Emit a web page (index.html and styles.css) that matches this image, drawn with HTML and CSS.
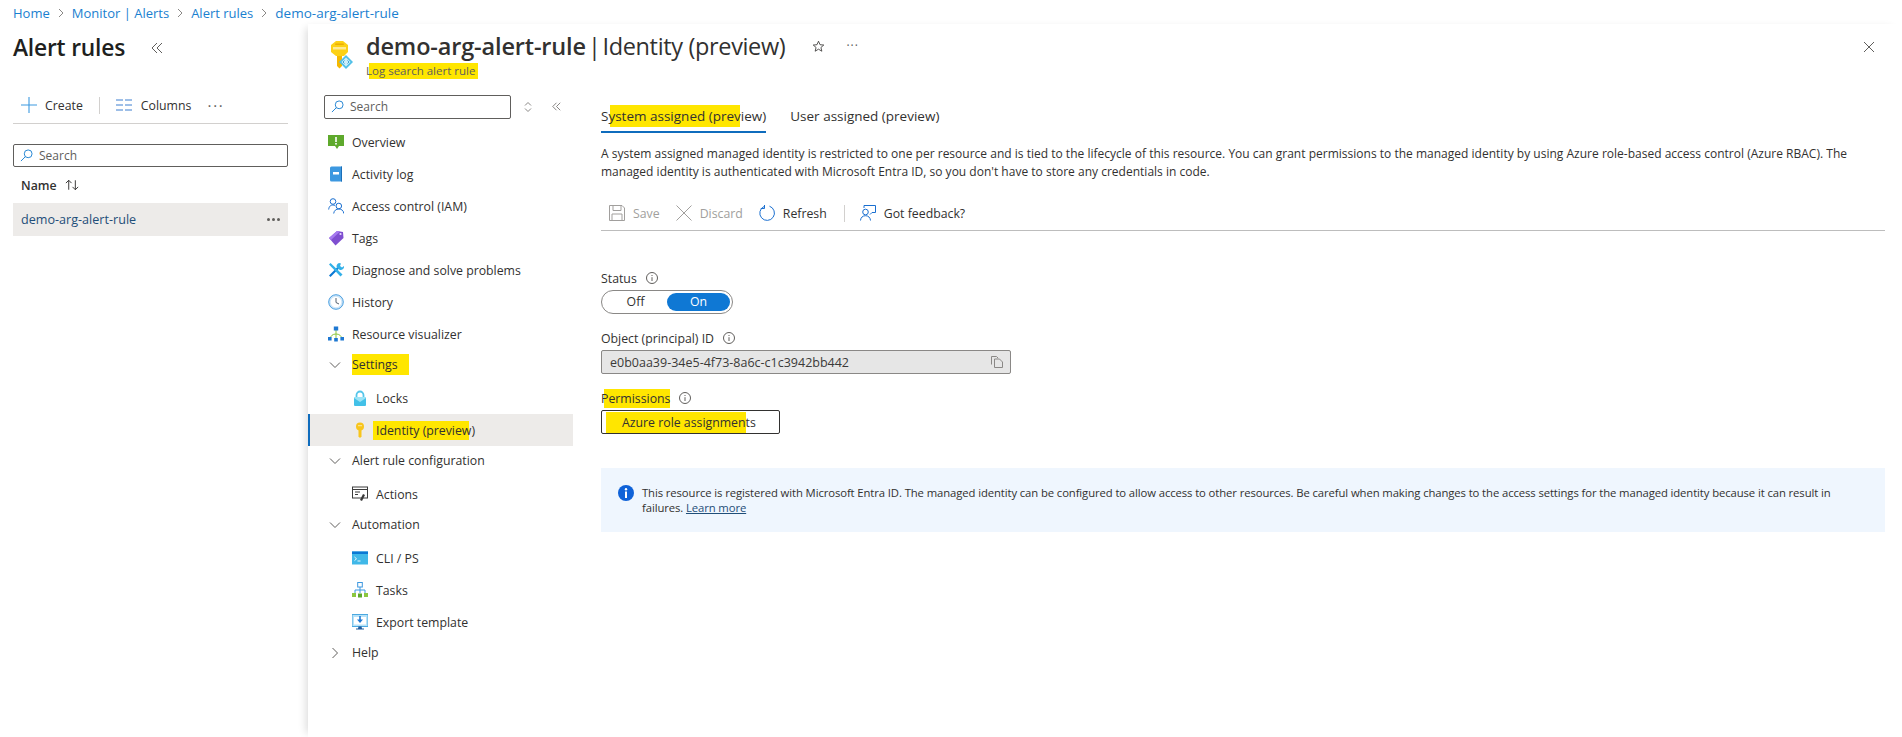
FILE: index.html
```html
<!DOCTYPE html>
<html lang="en">
<head>
<meta charset="utf-8">
<title>Identity (preview)</title>
<link rel="stylesheet" href="styles.css">
</head>
<body>
<nav class="crumbs">
  <a>Home</a><svg class="sep" viewBox="0 0 8 10"><path d="M2 1l4 4-4 4"/></svg>
  <a>Monitor | Alerts</a><svg class="sep" viewBox="0 0 8 10"><path d="M2 1l4 4-4 4"/></svg>
  <a>Alert rules</a><svg class="sep" viewBox="0 0 8 10"><path d="M2 1l4 4-4 4"/></svg>
  <a class="last">demo-arg-alert-rule</a>
</nav>
<div class="shell">
  <aside class="list">
    <div class="list-head">
      <h2>Alert rules</h2>
      <svg class="dbl" viewBox="0 0 12 12"><path d="M6 1L1 6l5 5M11 1L6 6l5 5"/></svg>
    </div>
    <div class="list-bar">
      <svg class="ic-plus" viewBox="0 0 16 16"><path d="M8 0v16M0 8h16"/></svg>
      <span>Create</span>
      <i class="vr"></i>
      <svg class="ic-cols" viewBox="0 0 16 12"><path d="M0 1h7M9 1h7M0 6h7M9 6h7M0 11h7M9 11h7"/></svg>
      <span>Columns</span>
      <span class="dots">···</span>
    </div>
    <label class="search wide">
      <svg viewBox="0 0 14 14"><circle cx="8.8" cy="5.2" r="4.2"/><path d="M5.8 8.2L1 13"/></svg>
      <span>Search</span>
    </label>
    <div class="col-head"><b>Name</b><svg viewBox="0 0 18 12"><path d="M5 11V1M2 4l3-3 3 3M12 1v10M9 8l3 3 3-3"/></svg></div>
    <div class="list-row"><span>demo-arg-alert-rule</span><span class="row-dots"><i></i><i></i><i></i></span></div>
  </aside>

  <main class="blade">
    <header class="blade-head">
      <svg class="res-icon" viewBox="0 0 22 28">
        <path d="M5 0h7l5 4v7l-4 4H5L0 11V4z" fill="#fcd116"/>
        <rect x="2" y="6" width="13" height="2.500" fill="#fff" opacity=".55"/>
        <rect x="4" y="2.500" width="9" height="1.500" rx=".7" fill="#e8a200" opacity=".75"/>
        <path d="M6 15h5v10l-2.500 2.500L6 25z" fill="#f5b800"/>
        <path d="M11 18h2v2h-2zM11 22h1v2h-1z" fill="#f5b800"/>
        <path d="M15 14l7 7-7 7-7-7z" fill="#50c0e8"/>
        <path d="M15 16.500l4.500 4.500-4.500 4.500-4.500-4.500z" fill="#cdeefa"/>
        <path d="M13.500 19.500L12 21l1.500 1.500M16.500 19.500L18 21l-1.500 1.500" fill="none" stroke="#1a8fc8" stroke-width=".8"/>
      </svg>
      <div class="head-text">
        <div class="title-line">
          <h1><b>demo-arg-alert-rule</b><span class="bar">|</span>Identity (preview)</h1>
          <svg class="star" viewBox="0 0 16 16"><path d="M8 1.500l1.900 4.300 4.600.4-3.500 3 1.100 4.600L8 11.300l-4.100 2.500L5 9.200l-3.500-3 4.600-.4z"/></svg>
          <span class="dots small">···</span>
        </div>
        <div class="sub"><mark class="m-sub">Log search alert rule</mark></div>
      </div>
      <svg class="close" viewBox="0 0 12 12"><path d="M1 1l10 10M11 1L1 11"/></svg>
    </header>

    <div class="blade-body">
      <nav class="menu">
        <div class="menu-top">
          <label class="search side">
            <svg viewBox="0 0 14 14"><circle cx="8.8" cy="5.2" r="4.2"/><path d="M5.8 8.2L1 13"/></svg>
            <span>Search</span>
          </label>
          <svg class="updown" viewBox="0 0 8 12"><path d="M1 4.500L4 1.500l3 3M1 7.500l3 3 3-3"/></svg>
          <svg class="dbl small" viewBox="0 0 12 12"><path d="M6 1L1 6l5 5M11 1L6 6l5 5"/></svg>
        </div>
        <a class="item">
          <svg viewBox="0 0 16 16"><rect y="1" width="16" height="11" fill="#5ea92c"/><path d="M7 12h4l-2 3z" fill="#5ea92c"/><rect x="7.200" y="3" width="1.600" height="5" fill="#fff"/><rect x="7.200" y="9" width="1.600" height="1.600" fill="#fff"/></svg>
          <span>Overview</span></a>
        <a class="item">
          <svg viewBox="0 0 16 16"><path d="M2 2q0-1.500 1.500-1.500H14V15.500H3.500Q2 15.500 2 14z" fill="#3c98e0"/><path d="M13 .5h1v15h-1z" fill="#1b6fb8"/><rect x="5" y="6" width="6" height="2.500" fill="#fff"/></svg>
          <span>Activity log</span></a>
        <a class="item">
          <svg class="line-blue" viewBox="0 0 16 16"><circle cx="5" cy="3.500" r="2.800"/><path d="M.7 11.500C1 8 3 7 5 7c.8 0 1.500.2 2 .5"/><circle cx="10.800" cy="8" r="2.800"/><path d="M5.700 15.500c.3-3 2.500-4.500 5.100-4.500s4.800 1.500 5 4.500"/></svg>
          <span>Access control (IAM)</span></a>
        <a class="item">
          <svg viewBox="0 0 16 16"><path d="M1 8L9 1l6 1 .5 6-8 7.500z" fill="#7f4fd0"/><path d="M1 8L9 1l3 .5L3 10z" fill="#a67af0"/><circle cx="12.500" cy="4" r="1.100" fill="#e8dcff"/></svg>
          <span>Tags</span></a>
        <a class="item">
          <svg viewBox="0 0 16 16"><path d="M1 13.500L10 4.500l1.500 1.500L2.500 15z" fill="#0a78d4"/><path d="M11 1a3.500 3.500 0 0 0-2 5l3 2a3.500 3.500 0 0 0 4-4l-2 1.500-2-1.500L13 1.500z" fill="#32b0e8"/><path d="M1 2.500L2.500 1l12 11.500-2 2z" fill="#32b0e8"/></svg>
          <span>Diagnose and solve problems</span></a>
        <a class="item">
          <svg viewBox="0 0 16 16"><circle cx="8" cy="8" r="7.300" fill="#cfe6f8" stroke="#4a9fe0"/><circle cx="8" cy="8" r="5.300" fill="#fff"/><path d="M8 4v4.500l3 1.500" fill="none" stroke="#54606e" stroke-width="1"/></svg>
          <span>History</span></a>
        <a class="item">
          <svg viewBox="0 0 16 16"><path d="M8 4v8M2 13q1-5 6-5t6 5" fill="none" stroke="#8cc63f"/><rect x="5.800" y=".5" width="4.400" height="4" fill="#1e78d2"/><rect x="0" y="11" width="3.600" height="3.500" fill="#1e78d2"/><rect x="6.200" y="12" width="3.600" height="3.500" fill="#1e78d2"/><rect x="12.400" y="11" width="3.600" height="3.500" fill="#1e78d2"/></svg>
          <span>Resource visualizer</span></a>

        <div class="group"><svg class="chev" viewBox="0 0 12 8"><path d="M1 1.500l5 5 5-5"/></svg><mark class="m-set">Settings</mark></div>
        <a class="item sub-item">
          <svg viewBox="0 0 16 16"><path d="M4.500 8V5a3.500 3.500 0 0 1 7 0v3" fill="none" stroke="#54c5ea" stroke-width="1.800"/><rect x="2" y="7" width="12" height="9" rx="1" fill="#42c1e8"/><path d="M2 8l6 4 6-4v-1H2z" fill="#9be3f6"/></svg>
          <span>Locks</span></a>
        <a class="item sub-item current">
          <svg viewBox="0 0 16 16"><circle cx="8" cy="4.500" r="4" fill="#f8c51c"/><path d="M6.500 8h3v6.500L8 16l-1.500-1.500z" fill="#f8c51c"/><rect x="6" y="3.200" width="4" height="1" fill="#fff" opacity=".6"/></svg>
          <mark class="m-id">Identity (preview)</mark></a>

        <div class="group"><svg class="chev" viewBox="0 0 12 8"><path d="M1 1.500l5 5 5-5"/></svg><span>Alert rule configuration</span></div>
        <a class="item sub-item">
          <svg viewBox="0 0 16 16"><rect x=".5" y="1" width="15" height="11" fill="#fff" stroke="#3a3a3a"/><path d="M.5 3.500h15M3 6h5M3 8.500h3" fill="none" stroke="#3a3a3a"/><path d="M8 14l3-6 2 1-3 6z" fill="#3a3a3a"/></svg>
          <span>Actions</span></a>

        <div class="group"><svg class="chev" viewBox="0 0 12 8"><path d="M1 1.500l5 5 5-5"/></svg><span>Automation</span></div>
        <a class="item sub-item">
          <svg viewBox="0 0 16 16"><rect y="1.500" width="16" height="13" fill="#40b8e8"/><rect y="1.500" width="16" height="2.500" fill="#0a78d4"/><path d="M2.500 7l2 1.800-2 1.800M5.500 11h3" fill="none" stroke="#fff" stroke-width=".9"/></svg>
          <span>CLI / PS</span></a>
        <a class="item sub-item">
          <svg viewBox="0 0 16 16"><path d="M8 5v6M3 11V8h10v3" fill="none" stroke="#3c98e0"/><rect x="5.700" y=".5" width="4.600" height="4.500" fill="#fff" stroke="#3c98e0"/><rect x="0" y="11" width="4" height="4" fill="#8cc63f"/><rect x="6" y="11.500" width="4" height="4" fill="#5ea92c"/><rect x="12" y="11" width="4" height="4" fill="#8cc63f"/></svg>
          <span>Tasks</span></a>
        <a class="item sub-item">
          <svg viewBox="0 0 16 16"><rect y=".5" width="16" height="12" fill="#b6e2f8" stroke="#4aa8e0"/><rect x="2" y="3" width="12" height="7.500" fill="#fff"/><path d="M8 2v5" stroke="#1e78d2" stroke-width="1.600"/><path d="M5 5.500h6L8 9z" fill="#1e78d2"/><path d="M6.500 12.500h3l.5 2h2v1H4v-1h2z" fill="#1e5a9c"/></svg>
          <span>Export template</span></a>

        <div class="group"><svg class="chev closed" viewBox="0 0 8 12"><path d="M1.500 1l5 5-5 5"/></svg><span>Help</span></div>
      </nav>

      <section class="content">
        <div class="tabs">
          <span class="tab on"><mark class="m-tab">System assigned (preview)</mark></span>
          <span class="tab">User assigned (preview)</span>
        </div>
        <p class="desc">A system assigned managed identity is restricted to one per resource and is tied to the lifecycle of this resource. You can grant permissions to the managed identity by using Azure role-based access control (Azure RBAC). The managed identity is authenticated with Microsoft Entra ID, so you don't have to store any credentials in code.</p>
        <div class="cmd">
          <span class="cmd-btn off">
            <svg viewBox="0 0 16 16"><path d="M.5.500h12.500l2.500 2.500v12.500H.5zM4 .5v5h8v-5M3 15.500V9h10v6.500"/></svg>Save</span>
          <span class="cmd-btn off">
            <svg viewBox="0 0 16 16"><path d="M.5.500l15 15M15.500.500l-15 15"/></svg>Discard</span>
          <span class="cmd-btn">
            <svg class="blue" viewBox="0 0 16 16"><path d="M10.500 1.200A7.300 7.300 0 1 1 5 1.500M5.500 0v3.500H1.800"/></svg>Refresh</span>
          <i class="vr"></i>
          <span class="cmd-btn">
            <svg class="blue" viewBox="0 0 16 16"><circle cx="5.500" cy="7" r="2.800"/><path d="M.5 15.500c.2-3 2.200-4.800 5-4.800s4.800 1.800 5 4.800M4 3V.5h11.500v7H12l-2 2"/></svg>Got feedback?</span>
        </div>

        <div class="field first">
          <div class="f-label">Status<svg class="info" viewBox="0 0 12 12"><circle cx="6" cy="6" r="5.500"/><path d="M6 5.200V9M6 3v1"/></svg></div>
          <div class="toggle"><span>Off</span><span class="sel">On</span></div>
        </div>
        <div class="field">
          <div class="f-label">Object (principal) ID<svg class="info" viewBox="0 0 12 12"><circle cx="6" cy="6" r="5.500"/><path d="M6 5.200V9M6 3v1"/></svg></div>
          <div class="idbox"><span>e0b0aa39-34e5-4f73-8a6c-c1c3942bb442</span>
            <svg viewBox="0 0 12 12"><path d="M.5 8.500V.5h5l1.500 1.500M3.500 3h5l3 3v5.500h-8z"/></svg></div>
        </div>
        <div class="field">
          <div class="f-label"><mark class="m-perm">Permissions</mark><svg class="info" viewBox="0 0 12 12"><circle cx="6" cy="6" r="5.500"/><path d="M6 5.200V9M6 3v1"/></svg></div>
          <div class="rolebtn"><mark class="m-role">Azure role assignments</mark></div>
        </div>

        <div class="notice">
          <svg viewBox="0 0 16 16"><circle cx="8" cy="8" r="8" fill="#0f62d8"/><rect x="7" y="6.500" width="2" height="6.500" fill="#fff"/><circle cx="8" cy="4.200" r="1.200" fill="#fff"/></svg>
          <p>This resource is registered with Microsoft Entra ID. The managed identity can be configured to allow access to other resources. Be careful when making changes to the access settings for the managed identity because it can result in failures. <a>Learn more</a></p>
        </div>
      </section>
    </div>
  </main>
</div>
</body>
</html>
```
FILE: styles.css
```css
* { box-sizing: border-box; }
html, body { height: 100%; }
body {
  margin: 0;
  height: 737px;
  overflow: hidden;
  background: #fff;
  color: #323130;
  font-family: "Open Sans", "Noto Sans", sans-serif;
  font-size: 12.300px;
  display: flex;
  flex-direction: column;
}
mark { color: inherit; background: #ffe600; }
svg { flex: none; display: block; }

.crumbs {
  height: 25px;
  padding: 0 0 0 13px;
  display: flex;
  align-items: center;
  font-size: 13px;
}
.crumbs a { color: #1a7fd0; }
.crumbs .last { font-size: 13.500px; }
.sep { width: 8px; height: 10px; margin: 0 7px; fill: none; stroke: #8a8886; }

.shell { flex: 1; display: flex; min-height: 0; }

.list { width: 308px; flex: none; padding-left: 13px; padding-right: 20px; }
.list-head { height: 45px; display: flex; align-items: center; }
.list-head h2 { margin: 0; font-size: 22.800px; font-weight: 600; color: #201f1e; width: 138px; letter-spacing: -.2px; }
.dbl { width: 12px; height: 12px; fill: none; stroke: #605e5c; }
.list-bar {
  margin-top: 20px;
  height: 34px;
  padding: 0 0 3px 8px;
  display: flex;
  align-items: center;
  border-bottom: 1px solid #d2d0ce;
}
.ic-plus { width: 16px; height: 16px; stroke: #3c9ae0; fill: none; margin-right: 8px; stroke-width: 1.100; }
.vr { width: 1px; height: 17px; background: #d2d0ce; display: block; }
.list-bar .vr { margin: 0 16px; }
.ic-cols { width: 16px; height: 12px; stroke: #3c7ed0; fill: none; margin-right: 9px; }
.dots { margin-left: 16px; font-size: 15px; font-weight: 400; letter-spacing: 1.800px; line-height: 1; color: #605e5c; }

.search {
  display: flex;
  align-items: center;
  height: 24px;
  border: 1px solid #605e5c;
  border-radius: 2px;
  padding-left: 6px;
  color: #605e5c;
  font-size: 12px;
}
.search svg { width: 13px; height: 13px; fill: none; stroke: #1a7fd0; margin-right: 6px; }
.wide { margin-top: 20px; height: 23px; }
.col-head { height: 36px; display: flex; align-items: center; padding: 0 0 0 8px; gap: 7px; color: #323130; }
.col-head b { font-weight: 600; }
.col-head svg { width: 17px; height: 12px; fill: none; stroke: #323130; }
.list-row {
  height: 33px;
  background: #edebe9;
  display: flex;
  align-items: center;
  justify-content: space-between;
  padding: 0 8px;
  font-size: 12.600px;
}
.list-row span:first-child { color: #1f4e79; }
.row-dots { display: flex; gap: 2px; }
.row-dots i { width: 3px; height: 3px; border-radius: 50%; background: #605e5c; }

.blade {
  flex: 1;
  margin-top: -1px;
  min-width: 0;
  display: flex;
  flex-direction: column;
  box-shadow: -6px 0 8px -4px rgba(0,0,0,.14);
  position: relative;
}
.blade-head { height: 67px; display: flex; align-items: flex-start; padding: 6px 0 0 23px; }
.res-icon { width: 22px; height: 28px; margin-top: 11px; }
.head-text { margin-left: 13px; flex: 1; }
.title-line { display: flex; align-items: center; height: 30px; margin-top: 1px; }
h1 { margin: 0; font-size: 23.500px; font-weight: 400; color: #323130; line-height: 30px; letter-spacing: -.35px; white-space: nowrap; }
h1 b { font-weight: 600; letter-spacing: -.15px; }
.bar { margin: 0 2px; }
.star { width: 13px; height: 13px; fill: none; stroke: #323130; margin-left: 27px; }
.dots.small { margin-left: 21px; font-size: 12px; letter-spacing: 1px; }
.sub { margin-top: 2px; font-size: 11.500px; color: #605e5c; line-height: 16px; }
.m-sub {
  display: inline-block;
  height: 16px;
  padding-right: 3px;
  background: linear-gradient(#ffe600, #ffe600) 3px 0 no-repeat;
}
.close { width: 12px; height: 12px; fill: none; stroke: #605e5c; margin: 11px 27px 0 0; }

.blade-body { flex: 1; display: flex; min-height: 0; }
.menu { width: 265px; flex: none; }
.menu-top { display: flex; align-items: center; padding: 0 0 0 16px; height: 31px; }
.side { width: 187px; height: 24px; }
.updown { width: 8px; height: 12px; fill: none; stroke: #8a8886; margin-left: 13px; }
.dbl.small { width: 9px; height: 9px; margin-left: 20px; }
.item {
  display: flex;
  align-items: center;
  height: 32px;
  padding-left: 20px;
  color: #323130;
}
.item svg { width: 16px; height: 16px; margin-right: 8px; }
.menu-top + .item { margin-top: 4px; }
.line-blue { fill: none; stroke: #1a6fd0; }
.group { height: 32px; display: flex; align-items: center; padding: 0 0 3px 21px; }
.chev { width: 12px; height: 8px; fill: none; stroke: #605e5c; margin-right: 11px; }
.chev.closed { width: 8px; height: 12px; margin: 0 13px 0 2px; }
.m-set { padding: 2px 11px 2px 0; }
.sub-item { padding-left: 44px; }
.current { background: #edebe9; box-shadow: inset 2px 0 0 #0f6cbd; }
.m-id {
  margin-left: -3px;
  padding: 1px 0 1px 3px;
  background: linear-gradient(#ffe600, #ffe600) 0 0 / 96px 100% no-repeat;
}

.content { flex: 1; min-width: 0; padding: 0 17px 0 28px; }
.tabs { display: flex; gap: 24px; height: 32px; margin-top: 10px; }
.tab { height: 32px; padding-top: 6px; color: #323130; font-size: 13.500px; }
.tab.on { border-bottom: 2px solid #0f6cbd; }
.m-tab {
  padding: 2px 0;
  background: linear-gradient(#ffe600, #ffe600) 9px 0 / 130px 100% no-repeat;
}
.desc { margin: 12px 0 0; line-height: 18px; font-size: 12px; letter-spacing: .01px; color: #323130; }
.cmd {
  margin-top: 11px;
  height: 39px;
  display: flex;
  align-items: center;
  padding: 4px 0 0 8px;
  border-bottom: 1px solid #bdbdbd;
}
.cmd-btn { display: flex; align-items: center; }
.cmd-btn svg { width: 16px; height: 16px; fill: none; stroke: #1a6fd0; margin-right: 8px; }
.cmd-btn.off { color: #a19f9d; margin-right: 16px; }
.cmd-btn.off svg { stroke: #a19f9d; }
.cmd-btn + .vr { margin: 0 15px 0 17px; }

.field { margin-top: 15px; }
.first { margin-top: 38px; }
.f-label { display: flex; align-items: center; height: 18px; color: #323130; }
.info { width: 12px; height: 12px; margin-left: 9px; fill: none; stroke: #605e5c; }
.toggle {
  margin-top: 3px;
  width: 132px;
  height: 24px;
  border: 1px solid #8a8886;
  border-radius: 12px;
  display: flex;
  padding: 2px;
}
.toggle span { flex: 1; text-align: center; line-height: 18px; border-radius: 9px; }
.toggle .sel { background: #0f78d4; color: #fff; }
.idbox {
  margin-top: 3px;
  width: 410px;
  height: 24px;
  background: #e6e6e6;
  border: 1px solid #8a8886;
  border-radius: 2px;
  display: flex;
  align-items: center;
  justify-content: space-between;
  padding: 0 7px 0 8px;
  color: #3b3a39;
  font-size: 12.500px;
}
.idbox svg { width: 12px; height: 12px; fill: none; stroke: #8a8886; }
.rolebtn {
  margin-top: 3px;
  width: 179px;
  height: 24px;
  border: 1px solid #323130;
  border-radius: 2px;
  display: flex;
  align-items: center;
  padding-left: 4px;
}
.m-role {
  padding: 2px 0 2px 16px;
  background: linear-gradient(#ffe600, #ffe600) 0 0 / 140px 100% no-repeat;
}
.m-perm { padding: 1px 0; background: linear-gradient(#ffe600, #ffe600) 3px 0 no-repeat; }

.notice {
  margin-top: 34px;
  height: 64px;
  background: #eff6fe;
  display: flex;
  align-items: flex-start;
  padding: 17px 12px 0 17px;
}
.notice svg { width: 16px; height: 16px; margin-right: 8px; }
.notice p { margin: 0; font-size: 11.300px; line-height: 15px; letter-spacing: -.1px; }
.notice a { color: #1f4e79; text-decoration: underline; }
```
